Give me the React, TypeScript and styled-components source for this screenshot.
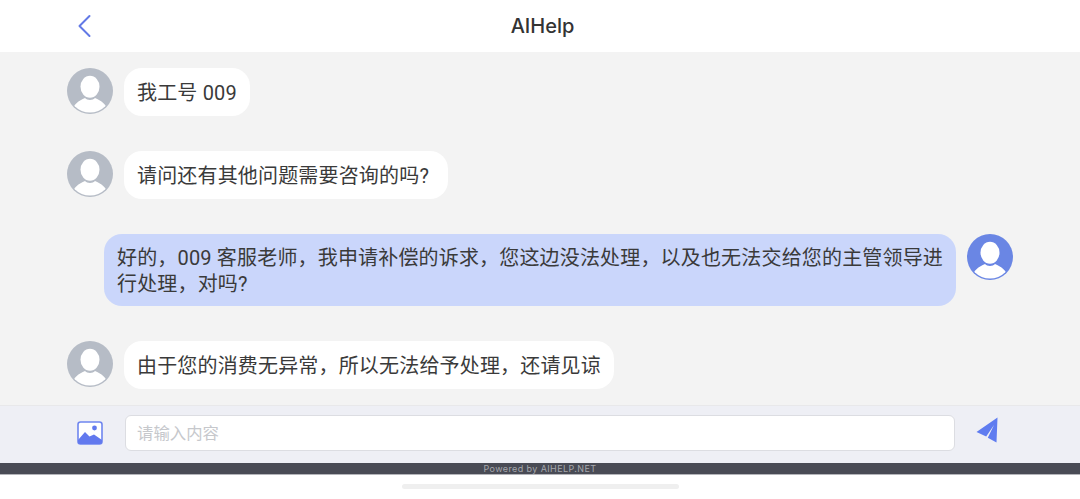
import React from "react";
import styled, { createGlobalStyle } from "styled-components";

const GlobalStyle = createGlobalStyle`
  html, body {
    margin: 0;
    padding: 0;
    background: #fff;
  }
  * {
    box-sizing: border-box;
  }
`;

function Avatar({ mine }: { mine?: boolean }) {
  const bg = mine ? "#6a86e4" : "#b6bcc6";
  const clip = mine ? "clip-mine" : "clip-other";
  return (
    <AvatarBox viewBox="0 0 46 46">
      <defs>
        <clipPath id={clip}>
          <circle cx="23" cy="23" r="21.6" />
        </clipPath>
      </defs>
      <circle cx="23" cy="23" r="23" fill={bg} />
      <g clipPath={`url(#${clip})`}>
        <ellipse cx="23" cy="18.7" rx="9.5" ry="11" fill="#fff" />
        <path
          d="M5 46 C5 36 12 33 18 30 C20 32.5 26 32.5 28 30 C34 33 41 36 41 46 Z"
          fill="#fff"
        />
      </g>
    </AvatarBox>
  );
}

function App() {
  return (
    <Page>
      <GlobalStyle />
      <Header>
        <BackButton viewBox="0 0 14 24">
          <path
            d="M12.5 2 L2.5 12 L12.5 22"
            fill="none"
            stroke="#6279e6"
            strokeWidth="2"
            strokeLinecap="round"
            strokeLinejoin="round"
          />
        </BackButton>
        <Title>AIHelp</Title>
      </Header>
      <Chat>
        <Row>
          <Avatar />
          <Bubble>我工号 009</Bubble>
        </Row>
        <Row>
          <Avatar />
          <Bubble $trail>请问还有其他问题需要咨询的吗?</Bubble>
        </Row>
        <Row $mine>
          <Bubble $mine>
            好的，009 客服老师，我申请补偿的诉求，您这边没法处理，以及也无法交给您的主管领导进行处理，对吗?
          </Bubble>
          <Avatar mine />
        </Row>
        <Row>
          <Avatar />
          <Bubble>由于您的消费无异常，所以无法给予处理，还请见谅</Bubble>
        </Row>
      </Chat>
      <Composer>
        <ImageIcon viewBox="0 0 26 24">
          <rect x="1" y="1" width="24" height="22" rx="2.5" fill="#fff" stroke="#6f86ef" strokeWidth="1.6" />
          <circle cx="17.5" cy="7" r="2.4" fill="#6279ee" />
          <path
            d="M1 19 L8 11 L12.5 15.5 L17 13.5 L25 19 V20.5 A2.5 2.5 0 0 1 22.5 23 H3.5 A2.5 2.5 0 0 1 1 20.5 Z"
            fill="#6279ee"
          />
        </ImageIcon>
        <Input>请输入内容</Input>
        <SendIcon viewBox="0 0 22 26">
          <path
            d="M21.5 0.5 L0.5 15 L10.2 19.5 L18 8 L11.8 20.8 L20.5 25.5 Z"
            fill="#5f7cf0"
          />
        </SendIcon>
      </Composer>
      <PoweredBar>Powered by AIHELP.NET</PoweredBar>
      <BottomArea>
        <HomeIndicator />
      </BottomArea>
    </Page>
  );
}

const Page = styled.div`
  width: 1080px;
  height: 499px;
  display: flex;
  flex-direction: column;
  overflow: hidden;
  font-family: "Inter", "Noto Sans CJK SC", sans-serif;
`;

const Header = styled.div`
  height: 52px;
  flex: none;
  display: flex;
  align-items: center;
  justify-content: center;
  position: relative;
  padding-left: 5px;
  background: #fff;
`;

const BackButton = styled.svg`
  position: absolute;
  left: 77px;
  top: 14px;
  width: 14px;
  height: 24px;
`;

const Title = styled.div`
  font-size: 20px;
  font-weight: 500;
  color: #333;
`;

const Chat = styled.div`
  flex: 1;
  min-height: 0;
  display: flex;
  flex-direction: column;
  gap: 35px;
  padding: 16px 67px 0;
  background: #f3f3f3;
  overflow: hidden;
`;

const Row = styled.div<{ $mine?: boolean }>`
  display: flex;
  flex: none;
  align-items: flex-start;
  gap: 11px;
  justify-content: ${(p) => (p.$mine ? "flex-end" : "flex-start")};
  padding-left: ${(p) => (p.$mine ? "37px" : "0")};
`;

const AvatarBox = styled.svg`
  width: 46px;
  height: 46px;
  flex: none;
`;

const Bubble = styled.div<{ $mine?: boolean; $trail?: boolean }>`
  font-family: "Roboto", "Noto Sans CJK SC", sans-serif;
  font-size: 20px;
  line-height: 26px;
  color: #3a3a3a;
  border-radius: 18px;
  letter-spacing: 0.17px;
  padding: ${(p) =>
    p.$mine ? "11px 10px 9px 13px" : `12px ${p.$trail ? "19px" : "13px"} 10px 13px`};
  background: ${(p) => (p.$mine ? "#cad6fb" : "#fff")};
`;

const Composer = styled.div`
  height: 58px;
  flex: none;
  display: flex;
  align-items: center;
  padding: 0 82px 3px 77px;
  background: #eeeff5;
  border-top: 1px solid #e8e8ea;
`;

const ImageIcon = styled.svg`
  width: 26px;
  height: 24px;
  flex: none;
  margin-right: 22px;
`;

const Input = styled.div`
  flex: 1;
  height: 36px;
  display: flex;
  align-items: center;
  padding: 0 0 2px 11px;
  font-size: 16.4px;
  color: #c6c8cc;
  background: #fff;
  border: 1px solid #dcdde2;
  border-radius: 6px;
`;

const SendIcon = styled.svg`
  width: 22px;
  height: 26px;
  flex: none;
  margin: 0 0 6px 21px;
`;

const PoweredBar = styled.div`
  height: 12px;
  flex: none;
  display: flex;
  align-items: center;
  justify-content: center;
  font-size: 9px;
  letter-spacing: 0.4px;
  color: #a5a7ad;
  background: #494b55;
  border-bottom: 1px solid #b4b5ba;
`;

const BottomArea = styled.div`
  height: 24px;
  flex: none;
  display: flex;
  justify-content: center;
  padding-top: 9px;
  background: #fff;
`;

const HomeIndicator = styled.div`
  width: 277px;
  height: 5px;
  border-radius: 3px;
  background: #efefef;
`;

export default App;
